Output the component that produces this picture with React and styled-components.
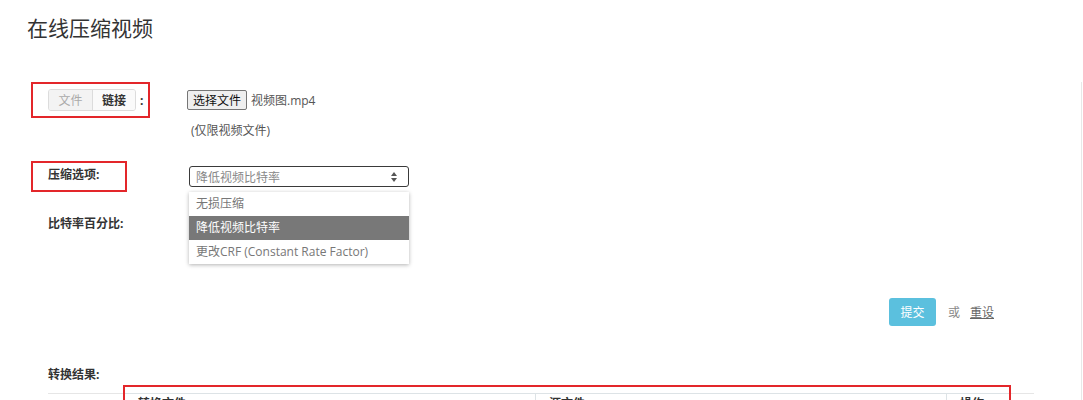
import React from "react";
import styled, { createGlobalStyle } from "styled-components";

const GlobalStyle = createGlobalStyle`
    body {
        margin: 0;
        background: #fff;
        font-family: "Open Sans", "Noto Sans CJK SC", sans-serif;
        color: #333;
    }
`;

const Page = styled.div`
    width: 1083px;
    height: 400px;
    overflow: hidden;
    padding-top: 13px;
    box-sizing: border-box;
`;

const Title = styled.h1`
    margin: 0 0 0 27px;
    font-size: 21px;
    line-height: 30px;
    font-weight: 400;
    color: #333;
`;

const Panel = styled.div`
    margin: 39px 0 0 31px;
    width: 1051px;
    height: 400px;
    border-right: 1px solid #e8e8e8;
    box-sizing: border-box;
`;

const Row = styled.div`
    display: flex;
    align-items: flex-start;
    margin-top: ${(p) => p.gap || 0}px;
`;

const LabelCell = styled.div`
    width: 156px;
    flex-shrink: 0;
`;

const Marked = styled.div`
    box-sizing: border-box;
    width: ${(p) => p.w}px;
    height: ${(p) => p.h}px;
    border: 2px solid #e3262a;
    padding-left: 15px;
    display: flex;
    align-items: center;
`;

const PlainLabel = styled.div`
    padding-left: 17px;
    font-size: 12px;
    font-weight: 700;
    line-height: 18px;
    color: #333;
`;

const BoldLabel = styled.span`
    font-size: 12px;
    font-weight: 700;
    line-height: 18px;
    color: #333;
    margin-top: -4px;
`;

const Toggle = styled.div`
    display: flex;
    height: 22px;
    border: 1px solid #dcdcdc;
    border-radius: 3px;
    overflow: hidden;
    box-sizing: border-box;
`;

const ToggleItem = styled.span`
    width: ${(p) => p.w}px;
    display: flex;
    align-items: center;
    justify-content: center;
    font-size: 12px;
    font-weight: ${(p) => (p.active ? 700 : 400)};
    color: ${(p) => (p.active ? "#333" : "#aaa")};
    background: ${(p) => (p.active ? "#fafafa" : "#f3f3f3")};
    border-left: ${(p) => (p.active ? "1px solid #dcdcdc" : "none")};
`;

const Colon = styled.span`
    margin-left: 4px;
    font-size: 12px;
    font-weight: 700;
`;

const ControlCell = styled.div`
    padding-top: ${(p) => p.top || 0}px;
    position: relative;
`;

const FileLine = styled.div`
    display: flex;
    align-items: center;
    font-size: 12px;
    color: #555;
`;

const FileButton = styled.span`
    height: 20px;
    box-sizing: border-box;
    padding: 0 5px;
    display: inline-flex;
    align-items: center;
    background: #efefef;
    border: 1px solid #767676;
    border-radius: 2px;
    font-size: 12px;
    color: #111;
    margin-right: 4px;
`;

const Note = styled.div`
    margin: 12px 0 0 4px;
    font-size: 12px;
    line-height: 18px;
    color: #555;
`;

const Select = styled.div`
    margin-left: 2px;
    width: 220px;
    height: 21px;
    box-sizing: border-box;
    border: 1px solid #3a3a3a;
    border-radius: 3px;
    display: flex;
    align-items: center;
    justify-content: space-between;
    padding: 0 11px 0 6px;
    font-size: 12px;
    color: #888;
`;

const Dropdown = styled.ul`
    position: absolute;
    left: 2px;
    top: 31px;
    width: 220px;
    margin: 0;
    padding: 0;
    list-style: none;
    background: #fff;
    box-shadow: 0 1px 4px rgba(0, 0, 0, 0.3);
    z-index: 2;
`;

const Option = styled.li`
    height: 24px;
    line-height: 24px;
    padding-left: 7px;
    font-size: 12px;
    color: ${(p) => (p.selected ? "#fff" : "#777")};
    background: ${(p) => (p.selected ? "#787878" : "transparent")};
`;

const Actions = styled.div`
    display: flex;
    justify-content: flex-end;
    align-items: center;
    gap: 12px;
    margin-top: 65px;
    padding-right: 87px;
    font-size: 12px;
`;

const SubmitButton = styled.span`
    width: 47px;
    height: 28px;
    display: flex;
    align-items: center;
    justify-content: center;
    background: #5bc0de;
    border-radius: 3px;
    color: #fff;
`;

const Or = styled.span`
    color: #888;
    margin-right: -2px;
`;

const ResetLink = styled.span`
    color: #666;
    text-decoration: underline;
`;

const Results = styled.div`
    margin: 40px 47px 0 17px;
`;

const ResultsHead = styled.div`
    font-size: 12px;
    font-weight: 700;
    line-height: 18px;
    padding-bottom: 9px;
    border-bottom: 1px solid #e6e6e6;
`;

const TableFrame = styled.div`
    margin: -9px 0 0 75px;
    width: 888px;
    border: 2px solid #e3262a;
    box-sizing: border-box;
    background: #fff;
    position: relative;
`;

const HeadRow = styled.div`
    display: grid;
    grid-template-columns: 410px 411px 1fr;
    border-top: 1px solid #dde3e6;
    margin-top: 6px;
`;

const HeadCell = styled.div`
    padding: 1px 0 0 13px;
    font-size: 12px;
    font-weight: 700;
    line-height: 18px;
    height: 30px;
    border-left: ${(p) => (p.first ? "none" : "1px solid #dde3e6")};
`;

function SortArrows() {
    return (
        <svg width="6" height="10" viewBox="0 0 6 10">
            <path d="M3 0 L6 4 L0 4 Z" fill="#555" />
            <path d="M3 10 L6 6 L0 6 Z" fill="#555" />
        </svg>
    );
}

export default function App() {
    return (
        <>
            <GlobalStyle />
            <Page>
                <Title>在线压缩视频</Title>
                <Panel>
                    <Row>
                        <LabelCell>
                            <Marked w={119} h={36}>
                                <Toggle>
                                    <ToggleItem w={43}>文件</ToggleItem>
                                    <ToggleItem w={42} active>链接</ToggleItem>
                                </Toggle>
                                <Colon>:</Colon>
                            </Marked>
                        </LabelCell>
                        <ControlCell top={8}>
                            <FileLine>
                                <FileButton>选择文件</FileButton>
                                视频图.mp4
                            </FileLine>
                            <Note>(仅限视频文件)</Note>
                        </ControlCell>
                    </Row>

                    <Row gap={21}>
                        <LabelCell>
                            <Marked w={96} h={31}>
                                <BoldLabel>压缩选项:</BoldLabel>
                            </Marked>
                        </LabelCell>
                        <ControlCell top={5}>
                            <Select>
                                降低视频比特率
                                <SortArrows />
                            </Select>
                            <Dropdown>
                                <Option>无损压缩</Option>
                                <Option selected>降低视频比特率</Option>
                                <Option>更改CRF (Constant Rate Factor)</Option>
                            </Dropdown>
                        </ControlCell>
                    </Row>

                    <Row gap={23}>
                        <LabelCell>
                            <PlainLabel>比特率百分比:</PlainLabel>
                        </LabelCell>
                    </Row>

                    <Actions>
                        <SubmitButton>提交</SubmitButton>
                        <Or>或</Or>
                        <ResetLink>重设</ResetLink>
                    </Actions>

                    <Results>
                        <ResultsHead>转换结果:</ResultsHead>
                        <TableFrame>
                            <HeadRow>
                                <HeadCell first>转换文件</HeadCell>
                                <HeadCell>源文件</HeadCell>
                                <HeadCell>操作</HeadCell>
                            </HeadRow>
                        </TableFrame>
                    </Results>
                </Panel>
            </Page>
        </>
    );
}
